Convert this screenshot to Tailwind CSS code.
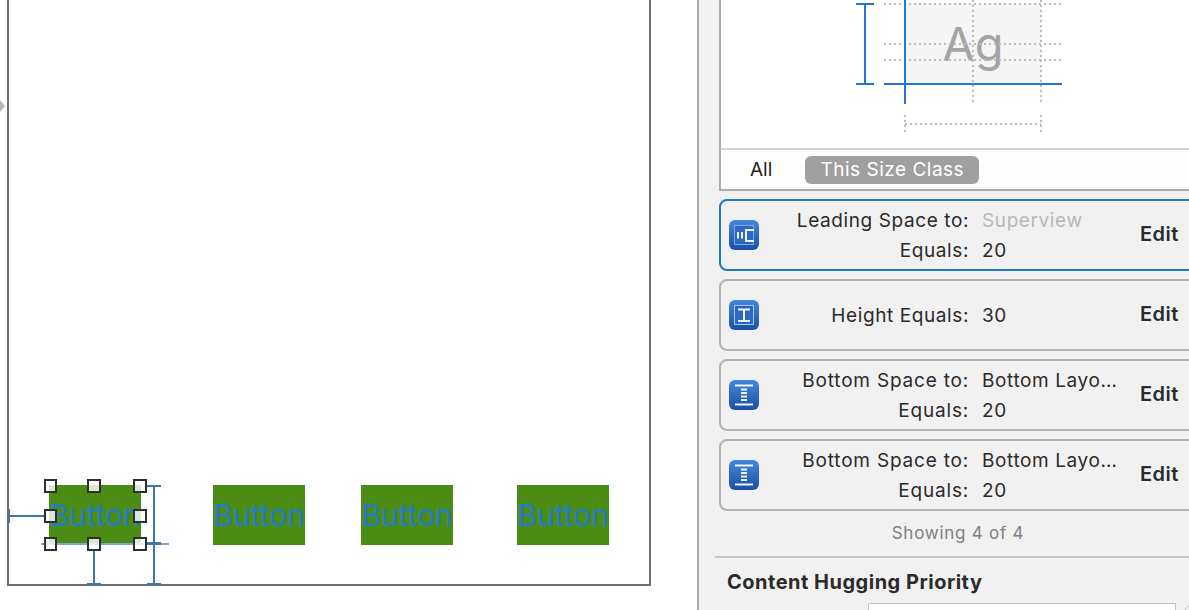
<!DOCTYPE html>
<html lang="en">
<head>
<meta charset="UTF-8">
<title>Size Inspector</title>
<script src="https://cdn.jsdelivr.net/npm/@tailwindcss/browser@4"></script>
</head>
<body class="bg-white">
<div class="flex w-[1189px] h-[610px] overflow-hidden font-['Inter',sans-serif] text-[#2b2b2b]">

  <!-- canvas -->
  <div class="relative w-[697px] shrink-0 bg-white">
    <div class="absolute left-0 top-[100px] w-0 h-0 border-y-[6px] border-y-transparent border-l-[5px] border-l-[#b5b5b5]"></div>
    <div class="absolute left-[7px] top-[-2px] w-[644px] h-[588px] border-2 border-[#6e6e6e]"></div>

    <div class="absolute left-[49px] top-[485px] w-[92px] h-[60px] bg-[#4b8d14] flex items-center justify-center text-[#2479c9] text-[30px] font-normal whitespace-nowrap">Button</div>
    <div class="absolute left-[213px] top-[485px] w-[92px] h-[60px] bg-[#4b8d14] flex items-center justify-center text-[#2479c9] text-[30px] font-normal whitespace-nowrap">Button</div>
    <div class="absolute left-[361px] top-[485px] w-[92px] h-[60px] bg-[#4b8d14] flex items-center justify-center text-[#2479c9] text-[30px] font-normal whitespace-nowrap">Button</div>
    <div class="absolute left-[517px] top-[485px] w-[92px] h-[60px] bg-[#4b8d14] flex items-center justify-center text-[#2479c9] text-[30px] font-normal whitespace-nowrap">Button</div>

    <!-- constraints and handles of the selected button -->
    <svg class="absolute left-0 top-0" width="697" height="610" viewBox="0 0 697 610" fill="none">
      <path d="M41 544H169" stroke="#7fa6c9" stroke-width="2"/>
      <g stroke="#3b78a8" stroke-width="2">
        <path d="M9 516H47M9 509V523"/>
        <path d="M94 550V585M87 584H101"/>
        <path d="M154 486V585M147 486H161M147 584H161"/>
      </g>
      <path d="M147 543.5H161" stroke="#3b78a8" stroke-width="3"/>
      <g fill="#ffffff" fill-opacity="0.8" stroke="#2f2f2f" stroke-width="2">
        <rect x="45" y="480" width="11" height="12"/>
        <rect x="88" y="480" width="12" height="12"/>
        <rect x="134" y="480" width="12" height="12"/>
        <rect x="45" y="510" width="11" height="12"/>
        <rect x="134" y="510" width="12" height="12"/>
        <rect x="45" y="538" width="11" height="12"/>
        <rect x="88" y="538" width="12" height="12"/>
        <rect x="134" y="538" width="12" height="12"/>
      </g>
    </svg>
  </div>

  <!-- inspector -->
  <div class="w-[492px] shrink-0 h-full bg-[#f1f1f1] border-l-2 border-[#a9a9a9] pl-[20px] overflow-hidden">
    <div class="w-[480px] h-[191px] bg-white border-2 border-t-0 border-[#ababab]">
      <svg class="block" width="478" height="148" viewBox="721 0 478 148" fill="none">
        <rect x="905" y="4" width="136" height="80" fill="#f5f5f5"/>
        <text x="973" y="61" text-anchor="middle" font-family="Inter, sans-serif" font-size="47" fill="#a4a4a4">Ag</text>
        <g stroke="#bdbdbd" stroke-width="2" stroke-dasharray="2 3">
          <path d="M884 4H1062M884 44H1062M884 60H1062"/>
          <path d="M973 0V104M1041 0V104"/>
          <path d="M905 124H1041M905 115V133M1041 115V133"/>
        </g>
        <g stroke="#1f78d8" stroke-width="2">
          <path d="M865 4V84M856 4H874M856 84H874"/>
          <path d="M884 84H1062M905 0V104"/>
        </g>
      </svg>
      <div class="h-[41px] border-t-2 border-[#d2d2d2] bg-[#fdfdfd] flex items-center pl-[29px] text-[19px] leading-none">
        <span class="text-[#222]">All</span>
        <span class="ml-[33px] w-[174px] h-[28px] rounded-[6px] bg-[#a0a0a0] text-white flex items-center justify-center tracking-[0.5px]">This Size Class</span>
      </div>
    </div>

    <div class="mt-[8px] flex flex-col gap-[8px] w-[480px]">
      <div class="h-[72px] rounded-[8px] border-2 border-[#1f78c8] flex items-center pl-[8px]">
        <svg class="shrink-0" width="30" height="30" viewBox="0 0 30 30" fill="none">
          <defs><linearGradient id="ic" x1="0" y1="0" x2="0" y2="1"><stop offset="0" stop-color="#4288dc"/><stop offset="1" stop-color="#1c4fa3"/></linearGradient></defs>
          <rect width="30" height="30" rx="6" fill="url(#ic)"/>
          <rect x="5.500" y="5.500" width="19" height="19" fill="#2d68c0" stroke="#7fa8e0"/>
          <path d="M9 12V18.500M13 12V18.500" stroke="#eef4fc" stroke-width="2"/>
          <path d="M25 10H17V21H25" stroke="#eef4fc" stroke-width="2"/>
        </svg>
        <div class="w-[210px] mt-[1px] text-right text-[19px] tracking-[0.6px] leading-[30px] whitespace-nowrap">
          <div>Leading Space to:</div>
          <div>Equals:</div>
        </div>
        <div class="w-[171px] mt-[1px] pl-[13px] text-[19px] tracking-[0.6px] leading-[30px] whitespace-nowrap">
          <div class="text-[#b8b8b8]">Superview</div>
          <div>20</div>
        </div>
        <span class="font-semibold text-[20px] tracking-[0.5px] mt-[-3px]">Edit</span>
      </div>

      <div class="h-[72px] rounded-[8px] border-2 border-[#b3b3b3] flex items-center pl-[8px]">
        <svg class="shrink-0" width="30" height="30" viewBox="0 0 30 30" fill="none">
          <rect width="30" height="30" rx="6" fill="url(#ic)"/>
          <rect x="5.500" y="5.500" width="19" height="19" fill="#2d68c0" stroke="#a9c6ee"/>
          <path d="M9 9.500H21M9 21H21M15 9.500V21" stroke="#eef4fc" stroke-width="2"/>
        </svg>
        <div class="w-[210px] mt-[1px] text-right text-[19px] tracking-[0.6px] leading-[30px] whitespace-nowrap">Height Equals:</div>
        <div class="w-[171px] mt-[1px] pl-[13px] text-[19px] tracking-[0.6px] leading-[30px] whitespace-nowrap">30</div>
        <span class="font-semibold text-[20px] tracking-[0.5px] mt-[-3px]">Edit</span>
      </div>

      <div class="h-[72px] rounded-[8px] border-2 border-[#b3b3b3] flex items-center pl-[8px]">
        <svg class="shrink-0" width="30" height="30" viewBox="0 0 30 30" fill="none">
          <rect width="30" height="30" rx="6" fill="url(#ic)"/>
          <path d="M6 5.500H24M6 24.500H24" stroke="#eef4fc" stroke-width="2"/>
          <path d="M12 9.500H18M12 13H18M12 16.500H18M12 20H18" stroke="#eef4fc" stroke-width="2"/>
        </svg>
        <div class="w-[210px] mt-[1px] text-right text-[19px] tracking-[0.8px] leading-[30px] whitespace-nowrap">
          <div>Bottom Space to:</div>
          <div>Equals:</div>
        </div>
        <div class="w-[171px] mt-[1px] pl-[13px] text-[19px] tracking-[0.6px] leading-[30px] whitespace-nowrap">
          <div>Bottom Layo…</div>
          <div>20</div>
        </div>
        <span class="font-semibold text-[20px] tracking-[0.5px] mt-[-3px]">Edit</span>
      </div>

      <div class="h-[72px] rounded-[8px] border-2 border-[#b3b3b3] flex items-center pl-[8px]">
        <svg class="shrink-0" width="30" height="30" viewBox="0 0 30 30" fill="none">
          <rect width="30" height="30" rx="6" fill="url(#ic)"/>
          <path d="M6 5.500H24M6 24.500H24" stroke="#eef4fc" stroke-width="2"/>
          <path d="M12 9.500H18M12 13H18M12 16.500H18M12 20H18" stroke="#eef4fc" stroke-width="2"/>
        </svg>
        <div class="w-[210px] mt-[1px] text-right text-[19px] tracking-[0.8px] leading-[30px] whitespace-nowrap">
          <div>Bottom Space to:</div>
          <div>Equals:</div>
        </div>
        <div class="w-[171px] mt-[1px] pl-[13px] text-[19px] tracking-[0.6px] leading-[30px] whitespace-nowrap">
          <div>Bottom Layo…</div>
          <div>20</div>
        </div>
        <span class="font-semibold text-[20px] tracking-[0.5px] mt-[-3px]">Edit</span>
      </div>
    </div>

    <div class="w-[478px] text-center text-[17px] leading-none text-[#7f7f7f] mt-[14px] tracking-[0.75px]">Showing 4 of 4</div>
    <div class="ml-[-4px] h-[2px] bg-[#c9c9c9] mt-[14px] w-[490px]"></div>
    <div class="mt-[14px] text-[20px] tracking-[0.5px] leading-none font-bold text-[#2b2b2b] ml-[8px]">Content Hugging Priority</div>
    <div class="ml-[149px] mt-[11px] flex items-start">
      <div class="w-[308px] h-[20px] shrink-0 bg-white border border-[#c4c4c4]"></div>
      <svg class="ml-[7px] mt-[1px] shrink-0" width="20" height="20" viewBox="0 0 20 20" fill="none">
        <circle cx="10" cy="10" r="9" stroke="#c4c4c4"/>
      </svg>
    </div>
  </div>
</div>
</body>
</html>
